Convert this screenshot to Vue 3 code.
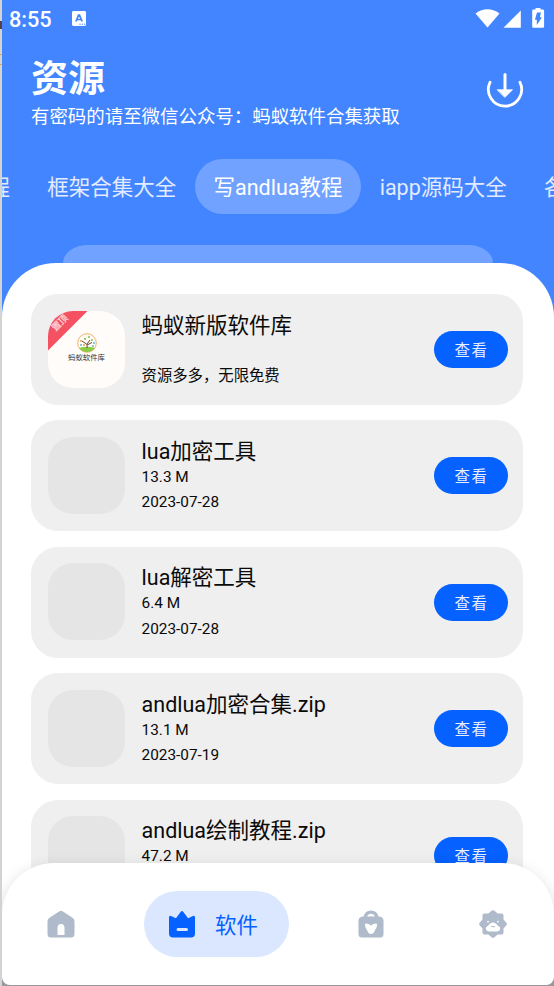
<script setup>
const tabs = ['程', '框架合集大全', '写andlua教程', 'iapp源码大全', '各']
const activeTab = 2
const items = [
  { title: '蚂蚁新版软件库', size: '', note: '资源多多，无限免费', pinned: true },
  { title: 'lua加密工具', size: '13.3 M', note: '2023-07-28' },
  { title: 'lua解密工具', size: '6.4 M', note: '2023-07-28' },
  { title: 'andlua加密合集.zip', size: '13.1 M', note: '2023-07-19' },
  { title: 'andlua绘制教程.zip', size: '47.2 M', note: '' }
]
</script>

<template>
  <div class="desktop">
    <div class="edge"><i class="edge-dark"></i><i class="edge-gold"></i></div>
    <main class="phone">
      <div class="status">
        <span class="clock">8:55</span>
        <svg class="ime" viewBox="0 0 14 15"><rect width="14" height="15" rx="1.4" fill="#fff" /><path d="M3.900 10.500 6.500 4.200h1l2.600 6.300M5 8.500h4" fill="none" stroke="#4285ff" stroke-width="1.7" /><path d="M7.500 13.200h1.200m1 0h1.200m1 0h1.200" stroke="#4285ff" stroke-width="1" /></svg>
        <svg class="signals" viewBox="0 0 70 22" fill="#fff">
          <path d="M.5 5.500Q12.500-2.800 24.500 5.500L12.500 19.500Z" />
          <path d="M45.800 2.600V19.800H28.500Z" />
          <path d="M60.500 0h5v1.500h2.300q1.300 0 1.300 1.300v15.700q0 1.300-1.300 1.300h-9.300q-1.300 0-1.300-1.300V2.800q0-1.300 1.300-1.300h2Z" />
          <path d="M62 4.500h4l-1.200 4.700H67L61.800 17v-5.300h-1.900Z" fill="#4285ff" />
        </svg>
      </div>

      <header class="header">
        <div>
          <h1>资源</h1>
          <p>有密码的请至微信公众号：蚂蚁软件合集获取</p>
        </div>
        <svg class="download" viewBox="0 0 38 38" fill="none" stroke="#fff" stroke-linecap="round">
          <path d="M4.100 11.200A16.600 16.600 0 1 0 33.900 11.200" stroke-width="2.800" />
          <path d="M19 3.500V20" stroke-width="3" />
          <path d="M11.500 18.800h15L19 26.200Z" fill="#fff" stroke-width=".8" />
        </svg>
      </header>

      <nav class="tabs">
        <span v-for="(tab, i) in tabs" :key="tab" class="tab" :class="{ active: i === activeTab }">{{ tab }}</span>
      </nav>
      <div class="back-layer"></div>

      <section class="sheet">
        <article v-for="item in items" :key="item.title" class="card">
          <div class="thumb" :class="{ pinned: item.pinned }">
            <template v-if="item.pinned">
              <svg class="tree" viewBox="0 0 20 20">
                <circle cx="10" cy="10" r="9.300" fill="#fffdf5" stroke="#f1ae68" stroke-width="1" />
                <path d="M2 15q8-2.500 16 0-3 4-8 4t-8-4Z" fill="#8acb45" />
                <path d="M10 15q.5-3-.5-4L5 8m5 3 3-4m-3 5 5-2.500" fill="none" stroke="#6d4938" stroke-width="1" />
                <path d="M7 6h2m2-2h2m1 3h2" stroke="#82bc55" stroke-width="1.700" />
                <path d="M3 12h2m11-2h2m-3 3h2" stroke="#66b5d8" stroke-width="1.500" />
                <path d="M3 8h2m1 4h2" stroke="#ef9a5b" stroke-width="1.300" />
              </svg>
              <small>蚂蚁软件库</small>
              <div class="ribbon"><b>置顶</b></div>
            </template>
          </div>
          <div class="info">
            <h2>{{ item.title }}</h2>
            <p>{{ item.size }}</p>
            <p>{{ item.note }}</p>
          </div>
          <button>查看</button>
        </article>
      </section>

      <nav class="bottom">
        <div class="nav-item">
          <svg viewBox="0 0 28 28"><path fill-rule="evenodd" d="M12.500 1.300q1.500-1 3 0l10 6.500Q27.500 9 27.500 11.500V24q0 3.500-3.500 3.500H4Q.5 27.500.5 24V11.500Q.5 9 2.500 7.800ZM10.500 25h7V18q0-4-3.500-4t-3.500 4Z" /></svg>
        </div>
        <div class="nav-item selected">
          <svg viewBox="0 0 28 28"><path fill-rule="evenodd" d="M12.800 1.800q1.200-1.800 2.400 0l4.900 6.500 4.300-2.100Q27 5 27 7.500v16q0 4-4 4H5q-4 0-4-4v-16Q1 5 3.600 6.200l4.300 2.100ZM10 18a1.500 1.500 0 0 0 0 3h8.500a1.500 1.500 0 0 0 0-3Z" /></svg>
          <span>软件</span>
        </div>
        <div class="nav-item bag">
          <svg viewBox="0 0 28 28"><path fill-rule="evenodd" d="M6.500 6.500Q8 .5 14 .5t7.500 6Q26.500 6.500 26.500 11V24q0 3.500-3.500 3.500H5Q1.500 27.500 1.500 24V11q0-4.500 5-4.500Zm3.700 0h7.600Q17 3.800 14 3.800T10.200 6.500Zm-2 7.300Q7.500 15.500 8.500 17.500l3 5.500q2.500 2 5 0l3-5.500q1-2 .3-3.700Q17.500 13 14 15.500 10.500 13 8.200 13.800Z" /></svg>
        </div>
        <div class="nav-item profile">
          <svg viewBox="0 0 28 28">
            <path d="M12.500.8q1.500-1.300 3 0l3.100 2.700h4q1.900 0 1.900 1.900v4l2.700 3.100q1.300 1.500 0 3l-2.700 3.100v4q0 1.900-1.900 1.900h-4l-3.100 2.700q-1.500 1.300-3 0l-3.100-2.700h-4q-1.900 0-1.900-1.900v-4L.8 15.500q-1.300-1.500 0-3l2.700-3.100v-4q0-1.900 1.900-1.900h4Z" />
            <path d="M9 16q2-3.500 5-3.500t5 3.500q3 1 2 3.500T17 21.500h-6q-3 .5-4-2T9 16Z" fill="#fff" />
            <circle cx="9" cy="11.700" r=".9" fill="#fff" /><circle cx="19" cy="11.700" r=".9" fill="#fff" />
            <path d="M11.500 16q2.500 2.500 5 0Z" />
          </svg>
        </div>
      </nav>
    </main>
  </div>
</template>

<style>
body { overflow: hidden; }
</style>
<style scoped>
* { box-sizing: border-box; margin: 0; }
.desktop { display: flex; width: 554px; height: 986px; overflow: hidden; background: #999; font-family: Roboto, "Noto Sans CJK SC", sans-serif; }
.edge { width: 2px; height: 986px; padding-top: 21px; background: #d3d3d1; }
.edge i { display: block; width: 2px; height: 8px; }
.edge-dark { background: #573f49; }
.edge .edge-gold { height: 11px; margin-top: 25px; border: solid #e7aa37; border-width: 1px 0; }
.phone { position: relative; display: flex; flex-direction: column; width: 552px; height: 985px; overflow: hidden; border-radius: 0 0 8px 8px; background: #4285ff; }
.status { display: flex; height: 54px; padding: 8px 9.500px 0 7px; color: #fff; }
.clock { width: 63px; font-size: 21.700px; font-weight: 500; line-height: 24px; }
.ime { width: 14px; height: 15px; margin-top: 3px; }
.signals { width: 70px; height: 22px; margin-left: auto; }
.header { display: flex; justify-content: space-between; height: 105px; padding: 0 30px 0 29px; color: #fff; }
h1 { margin-top: 2px; font-size: 37px; font-weight: 700; line-height: 48px; white-space: nowrap; }
.header p { font-size: 18.450px; line-height: 26px; white-space: nowrap; }
.download { width: 38px; height: 38px; margin-top: 17px; }
.tabs { display: flex; flex: none; height: 86px; margin-left: -32px; }
.tab { flex: none; height: 55px; padding: 0 18.600px; border-radius: 28px; color: #e2ebff; font-size: 21.500px; line-height: 58px; white-space: nowrap; }
.tab.active { background: #72a2ff; color: #fff; }
.back-layer { flex: none; width: 430px; height: 18px; margin-left: 60.500px; border-radius: 25px 25px 0 0 / 18px 18px 0 0; background: #72a2ff; }
.sheet { display: flex; flex-direction: column; gap: 15.400px; flex: none; width: 552px; height: 722px; padding: 31px 31px 0 29px; border-radius: 54px 54px 0 0; background: #fff; }
.card { display: flex; flex: none; height: 111px; padding: 16.500px 15px 16.500px 17px; border-radius: 27px; background: #efefef; }
.thumb { position: relative; display: flex; flex-direction: column; align-items: center; flex: none; width: 77px; height: 77px; padding-top: 22px; overflow: hidden; border-radius: 25px; background: #e5e5e5; }
.thumb.pinned { background: #fffcf9; }
.tree { width: 20px; height: 20px; flex: none; }
.thumb small { font-size: 7.400px; line-height: 10px; color: #333; white-space: nowrap; }
.ribbon { position: absolute; top: 0; left: 0; width: 40px; height: 40px; background: #f45163; clip-path: polygon(0 0, 100% 0, 0 100%); }
.ribbon b { display: block; width: 30px; margin: 5px 0 0 -3px; color: #ffd1d6; font-size: 9.500px; font-weight: 700; line-height: 14px; text-align: center; transform: rotate(-45deg); }
.info { flex: 1; margin-left: 16.600px; color: #0a0a0a; }
.info h2 { height: 28px; font-size: 21.500px; font-weight: 400; line-height: 30px; white-space: nowrap; }
.info p { height: 25.500px; font-size: 15.350px; line-height: 25.500px; white-space: nowrap; }
button { align-self: center; width: 74px; height: 37px; padding: 2px 0 0; border: 0; border-radius: 19px; background: #0561ff; color: #e6efff; font-family: inherit; font-size: 15.400px; line-height: 36px; letter-spacing: 1.500px; text-indent: 1px; }
.bottom { position: absolute; bottom: 0; left: 0; display: flex; align-items: flex-start; width: 552px; height: 122px; padding: 28px 47px 0 45px; border-radius: 52px 52px 8px 8px; background: #fff; box-shadow: 0 5px 16px rgba(0, 0, 0, .16); }
.nav-item { display: flex; align-items: center; flex: none; height: 66px; color: #afbaca; }
.nav-item svg { width: 28px; height: 28px; fill: currentColor; }
.nav-item.selected { width: 145px; margin-left: 69px; padding-left: 24px; gap: 19px; border-radius: 33px; background: #dbe7ff; color: #0561ff; font-size: 21.400px; }
.selected span { margin-top: -2px; }
.bag { margin-left: 68px; }
.profile { margin-left: 94px; }
</style>
